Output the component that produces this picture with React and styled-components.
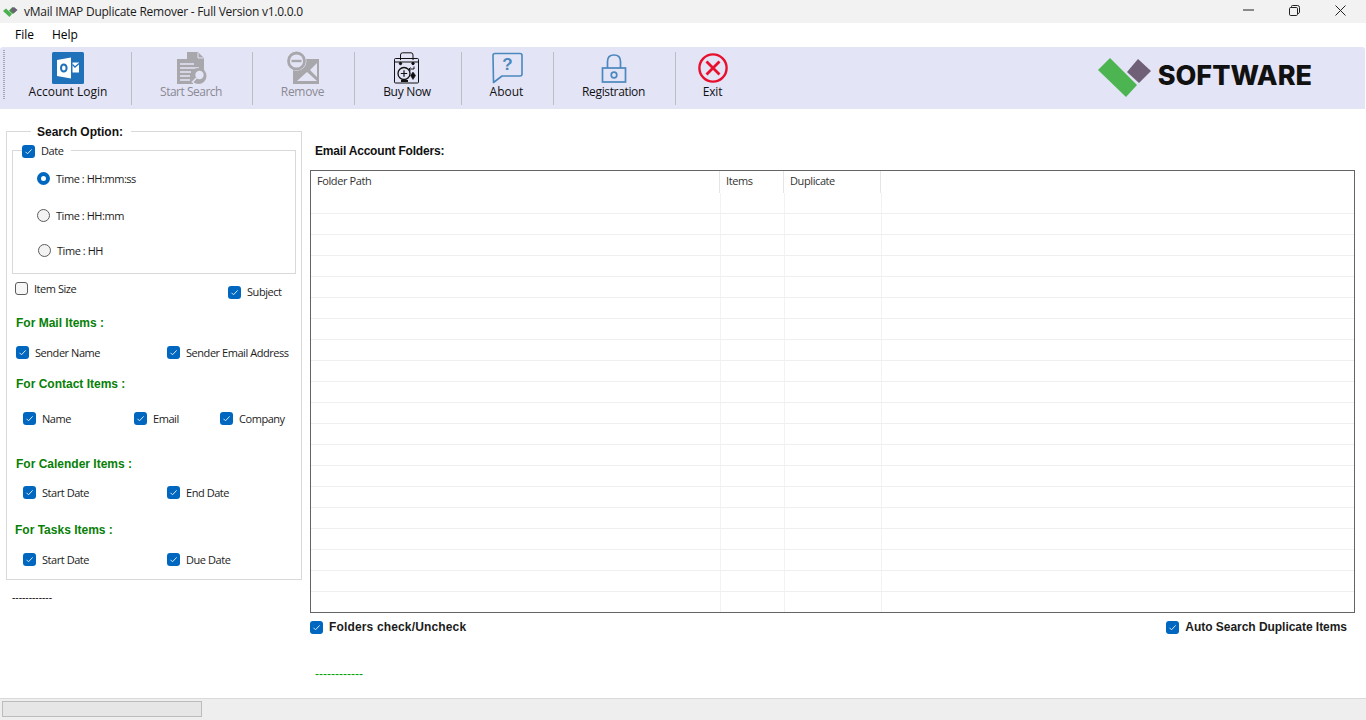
import React from 'react';
import styled, { createGlobalStyle } from 'styled-components';

const Global = createGlobalStyle`
  html, body { margin: 0; padding: 0; background: #fff; overflow: hidden; }
  #root { width: 1366px; height: 720px; }
`;
const Page = styled.div`
  width: 1366px; height: 720px; display: flex; flex-direction: column;
  font-family: "Liberation Sans", Arial, sans-serif; font-size: 12px; color: #000; background: #fff; overflow: hidden;
`;
const TitleBar = styled.div`
  height: 23px; flex: none; background: #f2f2f2; display: flex; align-items: center; padding-left: 3px;
`;
const TitleText = styled.span`
  margin-left: 5px; font-family: "Open Sans", sans-serif; font-size: 12px; color: #1a1a1a; letter-spacing: -0.25px;
`;
const WinButtons = styled.div`
  margin-left: auto; display: flex; align-items: center; height: 100%; padding-right: 3px;
`;
const WinButton = styled.div`
  width: 46px; display: flex; justify-content: center; align-items: center; margin-top: -3px;
`;
const MenuBar = styled.div`
  height: 24px; flex: none; display: flex; align-items: center; padding: 0 0 2px 15px; gap: 18px; box-sizing: border-box; font-family: "Open Sans", sans-serif; font-size: 12px;
`;
const Toolbar = styled.div`
  height: 62px; flex: none; background: #e4e4f7; display: flex; position: relative; box-sizing: border-box; border-radius: 3px 3px 0 0; margin-right: 1px;
`;
const Grip = styled.div`
  width: 2px; height: 50px; margin: 3px 0 0 3px; flex: none;
  background: repeating-linear-gradient(to bottom, #a5a5b5 0 1px, transparent 1px 2px);
`;
const ToolButton = styled.div`
  width: ${p => p.$w}px; flex: none; display: flex; flex-direction: column; align-items: center; padding: 5px ${p => p.$pr || 0}px 0 0; box-sizing: border-box;
  font-family: "Open Sans", sans-serif; font-size: 12px; letter-spacing: ${p => p.$ls || 0}px; color: ${p => p.$off ? '#8a8a92' : '#111'};
`;
const IconSlot = styled.div`
  height: 32px; display: flex; align-items: center; justify-content: center;
`;
const ToolLabel = styled.span`
  margin-top: -1px; line-height: 17px; white-space: nowrap;
`;
const Sep = styled.div`
  width: 1px; height: 53px; margin-top: 5px; background: #bdbdc2; flex: none;
`;
const Logo = styled.div`
  margin-left: auto; margin-right: 53px; display: flex; align-items: center; height: 56px;
`;
const LogoMarkWrap = styled.div`
  display: flex; margin-top: 6px;
`;
const LogoText = styled.span`
  font-family: Inter, sans-serif; font-weight: 800; font-size: 27px; letter-spacing: 0; color: #111; margin-left: 6px; line-height: 1;
`;
const Body = styled.div`
  flex: 1; display: flex; min-height: 0;
`;
const Side = styled.div`
  width: 310px; flex: none; padding: 22px 0 0 6px; box-sizing: border-box;
`;
const Group = styled.div`
  position: relative; width: 296px; height: 449px; border: 1px solid #d9d9d9; box-sizing: border-box; padding: 18px 5px 0 5px;
`;
const GroupTitle = styled.div`
  position: absolute; left: 24px; top: -7px; background: #fff; padding: 0 8px 0 6px; font-weight: 700; font-family: "Liberation Sans", sans-serif; font-size: 12px; line-height: 14px; color: #111;
`;
const DateBox = styled.div`
  position: relative; height: 124px; width: 284px; border: 1px solid #d9d9d9; box-sizing: border-box; margin-bottom: 9px;
`;
const DateLegend = styled.div`
  position: absolute; left: 9px; top: -7px; background: #fff; padding-right: 8px;
`;
const RadioCol = styled.div`
  display: flex; flex-direction: column; padding: 20px 0 0 24px;
`;
const RadioRow = styled.div`
  display: flex; align-items: center; height: 14px; margin-bottom: ${p => p.$mb}px; margin-left: ${p => p.$ml || 0}px;
  font-size: 11px; color: #1c1c1c; font-family: "Open Sans", sans-serif; letter-spacing: -0.45px;
`;
const RadioDot = styled.span`
  width: 13px; height: 13px; border-radius: 50%; box-sizing: border-box; flex: none; margin-right: 6px;
  ${p => p.$on ? 'border: 4px solid #0067c0; background: #fff;' : 'border: 1px solid #5c5c5c; background: #f3f3f3;'}
`;
const Box = styled.span`
  width: 13px; height: 13px; border-radius: 3px; box-sizing: border-box; flex: none; display: inline-flex; align-items: center; justify-content: center;
  ${p => p.$on ? 'background: #0067c0;' : 'border: 1px solid #5c5c5c; background: #f6f6f6;'}
`;
const CheckWrap = styled.label`
  display: inline-flex; align-items: center; gap: ${p => p.$gap ?? 6}px; font-size: ${p => p.$bold ? 12 : 11}px; line-height: 14px; color: #1c1c1c;
  font-family: ${p => p.$bold ? '"Liberation Sans", sans-serif' : '"Open Sans", sans-serif'}; font-weight: ${p => p.$bold ? 700 : 400}; white-space: nowrap; letter-spacing: ${p => p.$ls ?? -0.45}px;
`;
const Row = styled.div`
  display: flex; height: 14px; padding-left: ${p => p.$pl}px; margin-top: ${p => p.$mt}px; align-items: center;
`;
const Cell = styled.div`
  width: ${p => p.$w}px; flex: none; margin-top: ${p => p.$dy || 0}px;
`;
const Heading = styled.div`
  font-family: "Liberation Sans", sans-serif; font-weight: 700; font-size: 12px; line-height: 14px; color: #078007; margin-top: ${p => p.$mt}px; padding-left: ${p => p.$pl ?? 4}px;
`;
const Dash = styled.div`
  font-size: ${p => p.$fs}px; line-height: 10px; height: 10px; font-family: "Liberation Sans", sans-serif; color: ${p => p.$c};
  margin: ${p => p.$m};
`;
const Main = styled.div`
  flex: 1; min-width: 0; display: flex; flex-direction: column; padding-top: 35px;
`;
const MainTitle = styled.div`
  font-family: "Liberation Sans", sans-serif; font-weight: 700; font-size: 12px; line-height: 14px; margin-left: 5px; color: #111; letter-spacing: -0.2px;
`;
const TableBox = styled.div`
  width: 1045px; height: 443px; margin-top: 12px; border: 1px solid #646464; box-sizing: border-box; position: relative; overflow: hidden;
`;
const HeadRow = styled.div`
  display: grid; grid-template-columns: 409px 64px 97px 1fr; height: 22px; font-family: "Open Sans", sans-serif; font-size: 11px; color: #333; letter-spacing: -0.4px;
`;
const HeadCell = styled.div`
  padding: 2px 0 0 6px; line-height: 16px; border-right: ${p => p.$last ? 'none' : '1px solid #e5e5e5'};
`;
const DataRow = styled.div`
  display: grid; grid-template-columns: 410px 64px 97px 1fr; height: ${p => p.$h}px; border-bottom: 1px solid #efefef; box-sizing: border-box;
`;
const DataCell = styled.div`
  border-right: ${p => p.$last ? 'none' : '1px solid #f2f2f2'};
`;
const BelowTable = styled.div`
  width: 1045px; display: flex; justify-content: space-between; align-items: center; height: 14px; margin-top: 7px; padding-right: 8px; box-sizing: border-box;
`;
const StatusBar = styled.div`
  height: 22px; flex: none; background: #eeeeee; border-top: 1px solid #d9d9d9; box-sizing: border-box; padding: 2px 0 0 2px;
`;
const Progress = styled.div`
  width: 200px; height: 16px; background: #e6e6e6; border: 1px solid #bcbcbc; box-sizing: border-box;
`;

const Tick = () => (
  <svg width="9" height="9" viewBox="0 0 9 9"><path d="M1.5 4.8 L3.5 6.8 L7.6 2.4" fill="none" stroke="#dbe9f7" strokeWidth="1" /></svg>
);
const Check = ({ on = true, children, gap, bold, ls }) => (
  <CheckWrap $gap={gap} $bold={bold} $ls={ls}><Box $on={on}>{on && <Tick />}</Box>{children}</CheckWrap>
);

const AppMark = () => (
  <svg width="16" height="12" viewBox="0 0 16 12">
    <path d="M0 5 L3 2.5 L9 8 L6.5 11 Z" fill="#4caf50" />
    <path d="M8.5 7 L6 4.5 L9.5 1 L14 4 L10 8 Z" fill="#3f8f48" />
    <path d="M8 3.8 L11 1 L14.5 4 L11 7 Z" fill="#6f5f78" />
  </svg>
);
const Outlook = () => (
  <svg width="32" height="32" viewBox="0 0 32 32">
    <rect width="32" height="32" rx="1.5" fill="#1f72ba" />
    <path d="M5 8 L19 5.5 L19 26.5 L5 24 Z" fill="#fff" />
    <ellipse cx="11.8" cy="16" rx="2.8" ry="3.6" fill="none" stroke="#1f72ba" strokeWidth="2" />
    <path d="M20.5 10.5 H27 V20.5 H20.5 Z" fill="#fff" />
    <path d="M20.5 12.5 L23 15 L27 11.5" fill="none" stroke="#1f72ba" strokeWidth="1.3" />
  </svg>
);
const SearchDoc = () => (
  <svg width="32" height="32" viewBox="0 0 32 32">
    <path d="M2 7 H18 V32 H2 Z" fill="#a8a8ac" />
    <path d="M12 0 H23 L29 6 V18 H18 V26 H12 Z" fill="#a8a8ac" />
    <path d="M23 0.5 V6 H28.5" fill="none" stroke="#e4e4f7" strokeWidth="1" />
    <path d="M5 12 H19 M5 16 H24 M5 20 H16 M5 24 H15 M5 28 H15" stroke="#e4e4f7" strokeWidth="1.5" />
    <circle cx="23.5" cy="24" r="8" fill="#a8a8ac" />
    <circle cx="24.5" cy="23" r="4.2" fill="#e4e4f7" />
    <path d="M21.5 26 L17 30.5" stroke="#e4e4f7" strokeWidth="1.6" />
  </svg>
);
const RemoveMail = () => (
  <svg width="34" height="34" viewBox="0 0 34 34">
    <rect x="7" y="8" width="26" height="25" fill="#a8a8ac" />
    <path d="M11 30 L21 21 L31 30 Z M31 12 L24 19 L31 26 Z" fill="#e4e4f7" />
    <circle cx="10.5" cy="10" r="10" fill="#e4e4f7" />
    <circle cx="10.5" cy="10" r="8" fill="none" stroke="#a8a8ac" strokeWidth="2.8" />
    <path d="M5.5 10 H15.5" stroke="#a8a8ac" strokeWidth="2.4" />
  </svg>
);
const BuyBag = () => (
  <svg width="26" height="32" viewBox="0 0 26 32" fill="none" stroke="#111" strokeWidth="1">
    <path d="M6.5 8 V3 Q6.5 0.8 8.5 0.8 H17 Q19 0.8 19 3 V8" />
    <rect x="0.5" y="6.5" width="24" height="24.5" rx="1" />
    <path d="M0.5 10 H24.5" />
    <circle cx="6.5" cy="11.5" r="1.2" fill="#111" />
    <circle cx="19" cy="11.5" r="1.2" fill="#111" />
    <circle cx="10" cy="21.5" r="6" strokeWidth="1.3" />
    <path d="M6.8 21.5 H13.2 M10 18.3 V24.7" strokeWidth="1.2" />
    <path d="M20 14.5 V17 H15 M16.5 15.5 L15 17 L16.5 18.5" />
    <path d="M19 20 L21.5 23.5 L19 27.5 L16.5 23.5 Z" fill="#111" strokeWidth="0.6" />
    <path d="M7 29 H14" strokeWidth="2" />
  </svg>
);
const AboutIcon = () => (
  <svg width="32" height="32" viewBox="0 0 32 32" fill="none" stroke="#4a88bd" strokeWidth="1.6">
    <path d="M2 3.5 Q2 1.5 4 1.5 H29 Q31 1.5 31 3.5 V22 Q31 24 29 24 H11 L2.5 30.5 Z" strokeLinejoin="round" />
    <text x="16.5" y="18" fontFamily="'Liberation Sans', sans-serif" fontSize="17" fontWeight="700" fill="#4a88bd" stroke="none" textAnchor="middle">?</text>
  </svg>
);
const LockIcon = () => (
  <svg width="26" height="30" viewBox="0 0 26 30" fill="none" stroke="#4a88bd" strokeWidth="1.7">
    <path d="M6.5 15 V8.5 Q6.5 2 13 2 Q19.5 2 19.5 8.5 V15" />
    <rect x="1.5" y="15" width="23" height="14" />
    <circle cx="13" cy="22" r="2.8" />
  </svg>
);
const ExitIcon = () => (
  <svg width="30" height="30" viewBox="0 0 30 30" fill="none" stroke="#e8112d" strokeWidth="2.4">
    <circle cx="15" cy="15" r="13.6" />
    <path d="M8.5 8.5 L21.5 21.5 M21.5 8.5 L8.5 21.5" strokeWidth="2.8" />
  </svg>
);
const LogoMark = () => (
  <svg width="54" height="40" viewBox="0 0 54 40">
    <path d="M0 12 L12 0 L39 27 L28 39 Z" fill="#4cb551" />
    <path d="M29 14 L40 1 L53 13 L41 25 Z" fill="#6f6078" />
  </svg>
);

const rowHeights = Array.from({ length: 20 }, () => 21);

export default function App() {
  return (
    <Page>
      <Global />
      <TitleBar>
        <AppMark />
        <TitleText>vMail IMAP Duplicate Remover - Full Version v1.0.0.0</TitleText>
        <WinButtons>
          <WinButton><svg width="11" height="2" viewBox="0 0 11 2"><path d="M0 1 H11" stroke="#222" strokeWidth="1" /></svg></WinButton>
          <WinButton><svg width="11" height="11" viewBox="0 0 11 11" fill="none" stroke="#222"><rect x="0.5" y="2.5" width="8" height="8" rx="1.2" /><path d="M2.5 2.5 V1.5 Q2.5 0.5 3.5 0.5 H8.5 Q10.5 0.5 10.5 2.5 V7.5 Q10.5 8.5 8.5 8.5" /></svg></WinButton>
          <WinButton><svg width="11" height="11" viewBox="0 0 11 11"><path d="M0.5 0.5 L10.5 10.5 M10.5 0.5 L0.5 10.5" stroke="#222" strokeWidth="1" /></svg></WinButton>
        </WinButtons>
      </TitleBar>
      <MenuBar><span>File</span><span>Help</span></MenuBar>
      <Toolbar>
        <Grip />
        <ToolButton $w={126}><IconSlot><Outlook /></IconSlot><ToolLabel>Account Login</ToolLabel></ToolButton>
        <Sep />
        <ToolButton $w={120} $pr={2} $ls={-0.5} $off><IconSlot><SearchDoc /></IconSlot><ToolLabel>Start Search</ToolLabel></ToolButton>
        <Sep />
        <ToolButton $w={101} $pr={2} $ls={-0.3} $off><IconSlot><RemoveMail /></IconSlot><ToolLabel>Remove</ToolLabel></ToolButton>
        <Sep />
        <ToolButton $w={106} $pr={2} $ls={-0.3}><IconSlot><BuyBag /></IconSlot><ToolLabel>Buy Now</ToolLabel></ToolButton>
        <Sep />
        <ToolButton $w={91} $pr={2}><IconSlot><AboutIcon /></IconSlot><ToolLabel>About</ToolLabel></ToolButton>
        <Sep />
        <ToolButton $w={121} $pr={2} $ls={-0.35}><IconSlot><LockIcon /></IconSlot><ToolLabel>Registration</ToolLabel></ToolButton>
        <Sep />
        <ToolButton $w={75} $pr={2} $ls={-0.2}><IconSlot><ExitIcon /></IconSlot><ToolLabel>Exit</ToolLabel></ToolButton>
        <Logo><LogoMarkWrap><LogoMark /></LogoMarkWrap><LogoText>SOFTWARE</LogoText></Logo>
      </Toolbar>
      <Body>
        <Side>
          <Group>
            <GroupTitle>Search Option:</GroupTitle>
            <DateBox>
              <DateLegend><Check gap={6}>Date</Check></DateLegend>
              <RadioCol>
                <RadioRow $mb={23}><RadioDot $on />Time : HH:mm:ss</RadioRow>
                <RadioRow $mb={21}><RadioDot />Time : HH:mm</RadioRow>
                <RadioRow $mb={0} $ml={1}><RadioDot />Time : HH</RadioRow>
              </RadioCol>
            </DateBox>
            <Row $pl={3} $mt={0}>
              <Cell $w={213}><Check on={false}>Item Size</Check></Cell>
              <Cell $w={70} $dy={5}><Check>Subject</Check></Cell>
            </Row>
            <Heading $mt={19}>For Mail Items :</Heading>
            <Row $pl={4} $mt={16}>
              <Cell $w={151}><Check>Sender Name</Check></Cell>
              <Cell $w={125}><Check>Sender Email Address</Check></Cell>
            </Row>
            <Heading $mt={17}>For Contact Items :</Heading>
            <Row $pl={11} $mt={21}>
              <Cell $w={111}><Check>Name</Check></Cell>
              <Cell $w={86}><Check>Email</Check></Cell>
              <Cell $w={70}><Check>Company</Check></Cell>
            </Row>
            <Heading $mt={31}>For Calender Items :</Heading>
            <Row $pl={11} $mt={15}>
              <Cell $w={144}><Check>Start Date</Check></Cell>
              <Cell $w={70}><Check>End Date</Check></Cell>
            </Row>
            <Heading $mt={23} $pl={3}>For Tasks Items :</Heading>
            <Row $pl={11} $mt={16}>
              <Cell $w={144}><Check>Start Date</Check></Cell>
              <Cell $w={70}><Check>Due Date</Check></Cell>
            </Row>
          </Group>
          <Dash $c="#111" $fs={10} $m="13px 0 0 6px">------------</Dash>
        </Side>
        <Main>
          <MainTitle>Email Account Folders:</MainTitle>
          <TableBox>
            <HeadRow>
              <HeadCell>Folder Path</HeadCell>
              <HeadCell>Items</HeadCell>
              <HeadCell>Duplicate</HeadCell>
              <HeadCell $last />
            </HeadRow>
            {rowHeights.map((h, i) => (
              <DataRow key={i} $h={h}>
                <DataCell /><DataCell /><DataCell /><DataCell $last />
              </DataRow>
            ))}
          </TableBox>
          <BelowTable>
            <Check bold gap={6} ls={0.15}>Folders check/Uncheck</Check>
            <Check bold gap={6} ls={-0.04}>Auto Search Duplicate Items</Check>
          </BelowTable>
          <Dash $c="#00a000" $fs={12} $m="35px 0 0 5px">------------</Dash>
        </Main>
      </Body>
      <StatusBar><Progress /></StatusBar>
    </Page>
  );
}
